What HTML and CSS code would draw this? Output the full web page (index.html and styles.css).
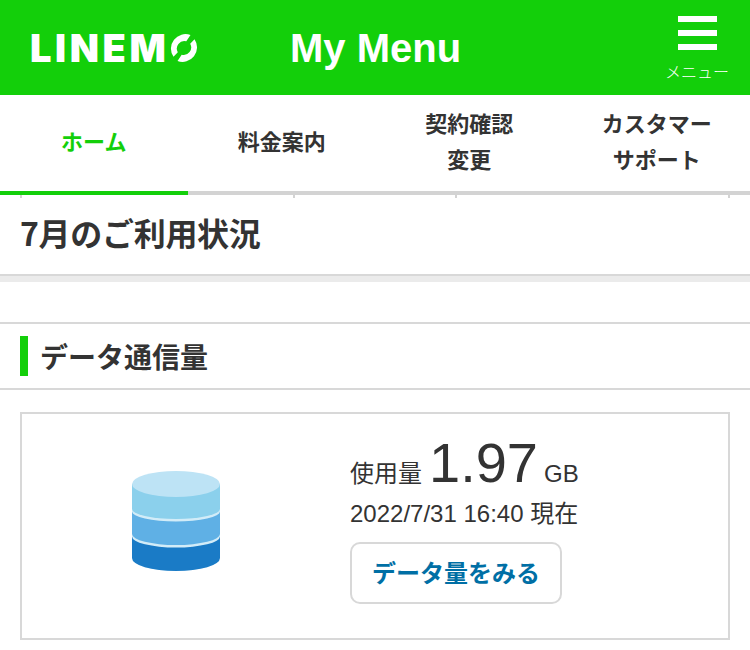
FILE: index.html
```html
<!DOCTYPE html>
<html lang="ja">
<head>
<meta charset="utf-8">
<title>My Menu</title>
<link rel="stylesheet" href="styles.css">
</head>
<body>
<header class="header">
  <div class="logo">
    <span class="logo-text">LINEM</span>
    <svg class="logo-o" viewBox="0 0 30 30" width="30" height="30" aria-hidden="true">
      <path d="M4.500 23.800A14.500 14.500 0 0 1 21.500 2L17.300 8.300A7.500 7.500 0 0 0 8.800 19.200Z" fill="#fff"/>
      <path d="M25.500 6.200A14.500 14.500 0 0 1 8.500 28L12.700 21.700A7.500 7.500 0 0 0 21.200 10.800Z" fill="#fff"/>
    </svg>
  </div>
  <h1 class="title">My Menu</h1>
  <div class="menu">
    <div class="burger"><span></span><span></span><span></span></div>
    <div class="menu-label">メニュー</div>
  </div>
</header>
<nav class="nav">
  <a class="nav-item active">ホーム</a>
  <a class="nav-item">料金案内</a>
  <a class="nav-item">契約確認<br>変更</a>
  <a class="nav-item">カスタマー<br>サポート</a>
  <i class="tick t1"></i><i class="tick t2"></i><i class="tick t3"></i><i class="tick t4"></i>
</nav>
<section class="usage-title"><h2>7月のご利用状況</h2></section>
<section class="section-head"><span class="mark"></span><h3>データ通信量</h3></section>
<section class="card">
  <div class="card-icon">
    <svg viewBox="0 0 88 100" width="88" height="100" aria-hidden="true">
      <path d="M0 13V87A44 13 0 0 0 88 87V13Z" fill="#d2ecf8"/>
      <path d="M0 13V38A44 10 0 0 0 88 38V13Z" fill="#8bd0ec"/>
      <path d="M0 40.500V63A44 11 0 0 0 88 63V40.500A44 10 0 0 1 0 40.500Z" fill="#5fb0e5"/>
      <path d="M0 65.500V87A44 13 0 0 0 88 87V65.500A44 11 0 0 1 0 65.500Z" fill="#1a7bc6"/>
      <ellipse cx="44" cy="13" rx="44" ry="13" fill="#bde3f5"/>
    </svg>
  </div>
  <div class="card-info">
    <div class="amount"><span class="amount-label">使用量</span><span class="amount-value">1.97</span><span class="amount-unit">GB</span></div>
    <div class="stamp">2022/7/31 16:40 現在</div>
    <a class="btn">データ量をみる</a>
  </div>
</section>
</body>
</html>
```
FILE: styles.css
```css
* { box-sizing: border-box; }
html, body { margin: 0; padding: 0; height: 650px; overflow: hidden; background: #fff; }
body { font-family: "Liberation Sans", "Noto Sans CJK JP", sans-serif; color: #333; }
h1, h2, h3 { margin: 0; }

.header { height: 95px; background: #13cf0a; display: flex; align-items: center; padding-left: 30px; color: #fff; position: relative; }
.logo { display: flex; align-items: center; width: 260px; height: 95px; }
.logo-text { font-family: "Inter", sans-serif; font-weight: 900; font-size: 38px; letter-spacing: 3.6px; line-height: 1; }
.logo-o { margin-left: 0; }
.title { font-size: 40px; font-weight: 700; line-height: 1; }
.menu { margin-left: auto; width: 84px; display: flex; flex-direction: column; align-items: center; padding-top: 16px; margin-right: 11px; align-self: flex-start; }
.burger { width: 39px; display: flex; flex-direction: column; gap: 8px; }
.burger span { display: block; height: 6px; background: #fff; }
.menu-label { font-size: 16px; line-height: 18px; margin-top: 12px; color: #fff; font-family: "Noto Sans CJK JP", sans-serif; font-weight: 300; }

.nav { height: 100px; display: grid; grid-template-columns: repeat(4, 1fr); border-bottom: 4px solid #d3d3d3; position: relative; }
.nav-item { display: flex; align-items: center; justify-content: center; text-align: center; font-family: "Noto Sans CJK JP", sans-serif; font-weight: 700; font-size: 22px; line-height: 36px; color: #333; height: 96px; padding: 0 0 6px 1px; }
.nav-item.active { color: #13cf0a; box-shadow: 0 4px 0 #13cf0a; padding-left: 0; }
.tick { position: absolute; top: calc(100% + 4px); width: 2px; height: 3px; background: #d3d3d3; z-index: 1; }
.t1 { left: 20px; } .t2 { left: 293px; } .t3 { left: 455px; } .t4 { left: 728px; }

.usage-title { height: 87px; display: flex; align-items: center; padding: 0 20px 7px; border-bottom: 6px solid #ebebeb; position: relative; }
.usage-title::after { content: ""; position: absolute; left: 0; right: 0; bottom: 0; height: 2px; background: #d8d8d8; }
.usage-title h2 { font-family: "Noto Sans CJK JP", sans-serif; font-size: 32px; font-weight: 700; line-height: 1; letter-spacing: -0.3px; }

.section-head { margin-top: 40px; height: 68px; border-top: 2px solid #d8d8d8; border-bottom: 2px solid #d8d8d8; display: flex; align-items: center; padding-left: 20px; gap: 12px; }
.mark { width: 8px; height: 40px; background: #13cf0a; }
.section-head h3 { font-family: "Noto Sans CJK JP", sans-serif; font-size: 28px; font-weight: 700; line-height: 1; }

.card { margin: 22px 20px 0; height: 228px; border: 2px solid #d8d8d8; display: flex; }
.card-icon { width: 328px; padding: 57px 0 0 110px; }
.card-icon svg { display: block; }
.card-info { display: flex; flex-direction: column; align-items: flex-start; }
.amount { height: 80px; display: flex; align-items: baseline; padding-top: 21px; }
.amount-label { font-family: "Noto Sans CJK JP", sans-serif; font-size: 24px; }
.amount-value { font-size: 56px; line-height: 56px; margin: 0 6px 0 7px; }
.amount-unit { font-size: 24px; }
.stamp { font-size: 24px; line-height: 30px; margin-top: 5px; }
.btn { margin-top: 13px; width: 212px; height: 62px; border: 2px solid #d8d8d8; border-radius: 10px; display: flex; align-items: center; justify-content: center; font-family: "Noto Sans CJK JP", sans-serif; font-weight: 700; font-size: 24px; color: #006fa5; padding-bottom: 3px; }
```
